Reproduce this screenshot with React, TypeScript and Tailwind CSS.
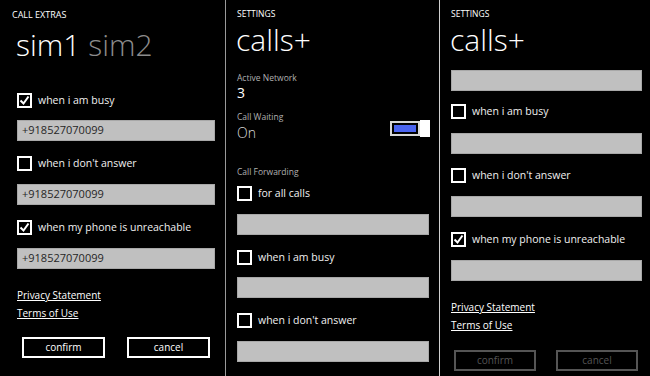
import React from "react";

const font = { fontFamily: '"Open Sans", "Segoe UI", "Liberation Sans", sans-serif' };

function Check({ checked, label, mt }: { checked?: boolean; label: string; mt: string }) {
  return (
    <div className={`flex items-center h-[15px] ${mt}`}>
      <div className="w-[15px] h-[15px] border-2 border-white flex items-center justify-center shrink-0">
        {checked && (
          <svg width="11" height="11" viewBox="0 0 11 11">
            <polyline points="1.5,5.5 4.5,8.5 9.5,1.5" fill="none" stroke="white" strokeWidth="2" />
          </svg>
        )}
      </div>
      <span className="ml-[6px] text-[10.5px] text-[#f0f0f0] leading-[15px]">{label}</span>
    </div>
  );
}

function Input({ value, mt }: { value?: string; mt: string }) {
  return (
    <div className={`h-[21px] bg-[#c0c0c0] border border-[#a8a8a8] flex items-center pl-[4px] text-[11px] text-[#262626] ${mt}`}>
      {value}
    </div>
  );
}

function Header({ text }: { text: string }) {
  return <div className="mt-[8px] h-[12px] text-[8.5px] leading-[12px] text-white">{text}</div>;
}

export default function App() {
  return (
    <div className="w-[650px] h-[376px] bg-black flex overflow-hidden text-white" style={font}>
      {/* Panel 1 */}
      <div className="w-[226px] h-full border-r border-[#9a9a9a] flex flex-col pl-[17px] pr-[10px]">
        <div className="mt-[9px] h-[12px] text-[9px] leading-[12px] -ml-[5px]">CALL EXTRAS</div>
        <div className="mt-[4px] h-[40px] text-[30px] leading-[40px] font-light -ml-[1px] whitespace-nowrap">
          <span className="text-white">sim1</span> <span className="text-[#8c8c8c]">sim2</span>
        </div>
        <Check checked label="when i am busy" mt="mt-[28px]" />
        <Input value="+918527070099" mt="mt-[12px]" />
        <Check label="when i don't answer" mt="mt-[15px]" />
        <Input value="+918527070099" mt="mt-[13px]" />
        <Check checked label="when my phone is unreachable" mt="mt-[15px]" />
        <Input value="+918527070099" mt="mt-[13px]" />
        <div className="mt-[18px] h-[16px] leading-[16px] text-[10px] underline">Privacy Statement</div>
        <div className="mt-[2px] h-[16px] leading-[16px] text-[10px] underline">Terms of Use</div>
        <div className="mt-[16px] flex pl-[5px] gap-[22px]">
          <div className="w-[83px] h-[21px] border-2 border-white flex items-center justify-center text-[10px]">confirm</div>
          <div className="w-[83px] h-[21px] border-2 border-white flex items-center justify-center text-[10px]">cancel</div>
        </div>
      </div>

      {/* Panel 2 */}
      <div className="w-[214px] h-full border-r border-[#d0d0d0] flex flex-col pl-[11px] pr-[10px]">
        <Header text="SETTINGS" />
        <div className="mt-[1px] h-[38px] text-[30px] leading-[38px] font-light -ml-[1px]">calls+</div>
        <div className="mt-[13px] h-[12px] leading-[12px] text-[8.5px] text-[#b0b0b0]">Active Network</div>
        <div className="h-[18px] leading-[18px] text-[14px] text-white">3</div>
        <div className="mt-[9px] flex justify-between items-start">
          <div className="flex flex-col">
            <div className="h-[12px] leading-[12px] text-[8.5px] text-[#b0b0b0]">Call Waiting</div>
            <div className="mt-[1px] h-[18px] leading-[18px] text-[14px] text-[#d8d8d8] font-light">On</div>
          </div>
          <div className="mt-[9px] flex items-center mr-[-1px]">
            <div className="w-[30px] h-[15px] border-2 border-[#d8d8d8] p-[2px] bg-black">
              <div className="w-full h-full bg-[#4a64f0]" />
            </div>
            <div className="w-[10px] h-[17px] bg-white" />
          </div>
        </div>
        <div className="mt-[24px] h-[12px] leading-[12px] text-[8.5px] text-[#b0b0b0]">Call Forwarding</div>
        <Check label="for all calls" mt="mt-[8px]" />
        <Input mt="mt-[13px]" />
        <Check label="when i am busy" mt="mt-[15px]" />
        <Input mt="mt-[12px]" />
        <Check label="when i don't answer" mt="mt-[15px]" />
        <Input mt="mt-[13px]" />
      </div>

      {/* Panel 3 */}
      <div className="flex-1 h-full flex flex-col pl-[11px] pr-[8px]">
        <Header text="SETTINGS" />
        <div className="mt-[1px] h-[38px] text-[30px] leading-[38px] font-light -ml-[1px]">calls+</div>
        <Input mt="mt-[11px]" />
        <Check label="when i am busy" mt="mt-[13px]" />
        <Input mt="mt-[14px]" />
        <Check label="when i don't answer" mt="mt-[14px]" />
        <Input mt="mt-[13px]" />
        <Check checked label="when my phone is unreachable" mt="mt-[15px]" />
        <Input mt="mt-[13px]" />
        <div className="mt-[18px] h-[16px] leading-[16px] text-[10px] underline">Privacy Statement</div>
        <div className="mt-[2px] h-[16px] leading-[16px] text-[10px] underline">Terms of Use</div>
        <div className="mt-[17px] flex pl-[3px] gap-[20px]">
          <div className="w-[82px] h-[21px] border-2 border-[#555] flex items-center justify-center text-[10px] text-[#555]">confirm</div>
          <div className="w-[82px] h-[21px] border-2 border-[#555] flex items-center justify-center text-[10px] text-[#555]">cancel</div>
        </div>
      </div>
    </div>
  );
}
